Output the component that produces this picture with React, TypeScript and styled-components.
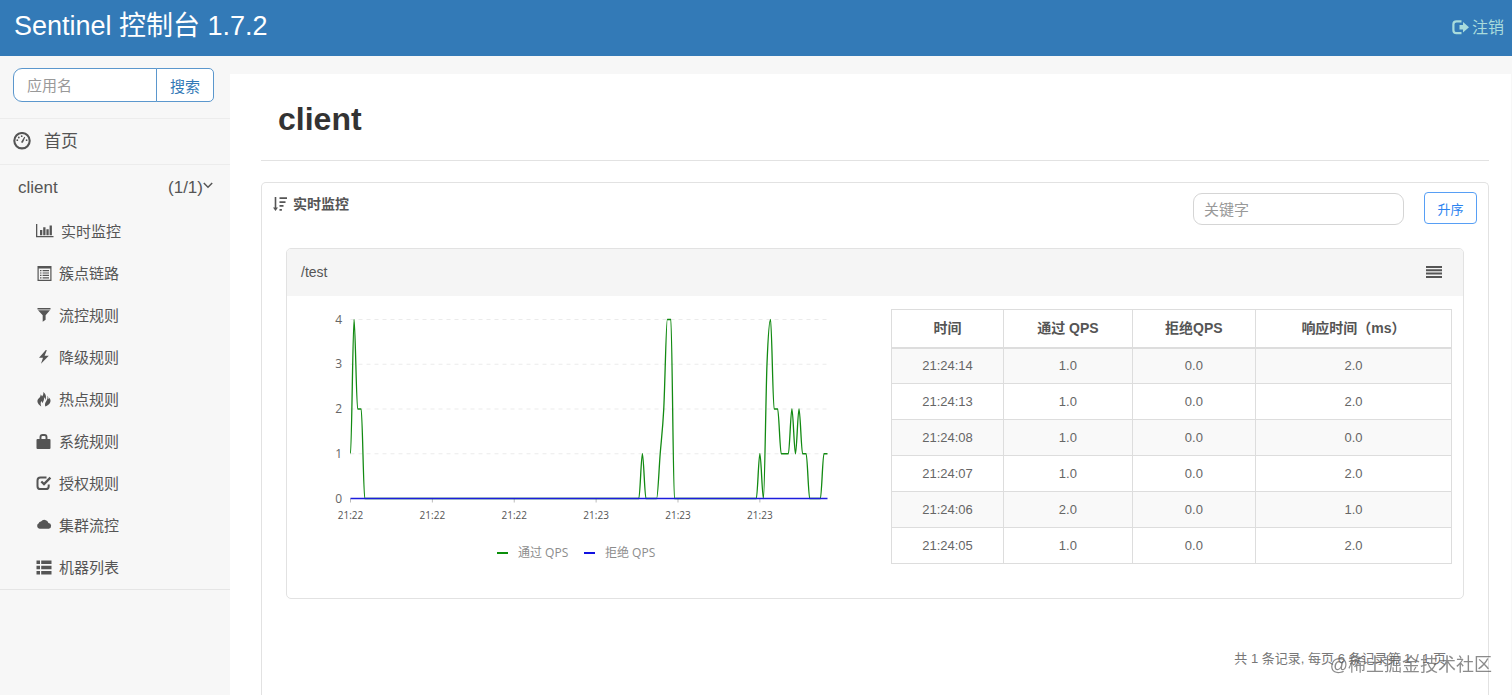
import React from "react";
import styled, { createGlobalStyle } from "styled-components";

const sans = `"Liberation Sans", "Noto Sans CJK SC", sans-serif`;

const GlobalStyle = createGlobalStyle`
  *, *::before, *::after { box-sizing: border-box; }
  body {
    margin: 0;
    background: #f7f7f7;
    color: #555;
    font-family: ${sans};
    font-size: 14px;
    line-height: 20px;
  }
  button, input { font-family: inherit; }
  a { color: inherit; text-decoration: none; }
`;

const Page = styled.div`
  display: flex;
  flex-direction: column;
  min-height: 100vh;
`;

const Header = styled.header`
  display: flex;
  justify-content: space-between;
  height: 56px;
  padding: 0 8px 0 14px;
  background: #337ab7;
`;

const Brand = styled.a`
  && { color: #fff; }
  font-size: 27px;
  line-height: 52px;
`;

const Logout = styled.a`
  display: flex;
  align-items: center;
  gap: 3px;
  && { color: #a9dcdc; }
  font-size: 16px;
`;

const Columns = styled.div`
  display: flex;
  flex: 1;
`;

const Sidebar = styled.nav`
  flex: none;
  width: 230px;
`;

const SearchForm = styled.form`
  display: flex;
  height: 34px;
  margin: 12px 16px 16px 13px;
`;

const AppSearch = styled.input`
  flex: 1;
  min-width: 0;
  padding: 0 13px;
  border: 1px solid #5b97cd;
  border-radius: 9px 0 0 9px;
  background: #fff;
  font-size: 15px;
  outline: none;
  &::placeholder { color: #999; }
`;

const SearchButton = styled.button`
  width: 58px;
  margin-left: -1px;
  padding: 0;
  border: 1px solid #5b97cd;
  border-radius: 0 5px 5px 0;
  background: #fff;
  color: #337ab7;
  font-size: 15px;
`;

const HomeLink = styled.a`
  display: flex;
  align-items: center;
  gap: 13px;
  height: 46px;
  padding-left: 13px;
  border-top: 1px solid #ececec;
  font-size: 17px;
`;

const AppRow = styled.a`
  display: flex;
  align-items: center;
  height: 46px;
  padding: 0 17px 0 18px;
  border-top: 1px solid #ececec;
  font-size: 17px;
`;

const AppCount = styled.span`
  margin-left: auto;
`;

const Menu = styled.ul`
  margin: 0;
  padding: 1px 0 0;
  list-style: none;
  border-bottom: 1px solid #e5e5e5;
`;

const MenuLink = styled.a`
  display: flex;
  align-items: center;
  gap: 7px;
  height: 42px;
  padding-left: 36px;
  font-size: 15px;
`;

const Main = styled.main`
  display: flex;
  flex: 1;
  flex-direction: column;
  min-width: 0;
  margin: 18px 1px 0 0;
  padding: 0 22px 0 31px;
  background: #fff;
`;

const Title = styled.h1`
  margin: 0 0 21px;
  padding: 25px 17px 21px;
  border-bottom: 1px solid #e2e2e2;
  color: #333;
  font-size: 32px;
  line-height: 40px;
`;

const Card = styled.section`
  flex: 1;
  padding: 0 24px;
  border: 1px solid #e2e2e2;
  border-bottom: 0;
  border-radius: 5px 5px 0 0;
`;

const CardHeader = styled.div`
  display: flex;
  align-items: flex-start;
  margin: 0 -13px 23px;
  padding-top: 9px;
`;

const CardTitle = styled.h2`
  display: flex;
  align-items: center;
  gap: 6px;
  margin: 2px auto 0 0;
  font-size: 14px;
  line-height: 20px;
`;

const Keyword = styled.input`
  width: 211px;
  height: 32px;
  margin: 1px 20px 0 0;
  padding: 0 10px;
  border: 1px solid #d5d5d5;
  border-radius: 9px;
  background: #fff;
  font-size: 15px;
  outline: none;
  &::placeholder { color: #999; }
`;

const SortButton = styled.button`
  width: 53px;
  height: 32px;
  padding: 0;
  border: 1px solid #579ff5;
  border-radius: 4px;
  background: #fff;
  color: #2b83f0;
  font-size: 13px;
`;

const Panel = styled.article`
  border: 1px solid #e2e2e2;
  border-radius: 5px;
  overflow: hidden;
`;

const PanelHeader = styled.header`
  display: flex;
  align-items: center;
  justify-content: space-between;
  height: 47px;
  padding: 0 21px 2px 14px;
  background: #f5f5f5;
`;

const IconButton = styled.button`
  display: flex;
  padding: 1px 0 0;
  border: 0;
  background: none;
  color: inherit;
`;

const PanelBody = styled.div`
  display: grid;
  grid-template-columns: 1fr 1fr;
`;

const Chart = styled.svg`
  display: block;
  width: 100%;
  font-family: "Open Sans", "Noto Sans CJK SC", sans-serif;
`;

const TableWrap = styled.div`
  padding: 13px 11px 0 16px;
`;

const Table = styled.table`
  width: 100%;
  border-collapse: collapse;
  table-layout: fixed;
  color: #666;
  font-size: 13px;
  text-align: center;
  th, td {
    padding: 0;
    border: 1px solid #ddd;
  }
  th {
    height: 38px;
    border-bottom-width: 2px;
    color: #555;
    font-size: 14px;
  }
  td { height: 36px; }
  tbody tr:nth-child(odd) { background: #f9f9f9; }
`;

const Pagination = styled.p`
  margin: 50px 18px 0;
  color: #777;
  font-size: 13px;
  text-align: right;
`;

const Watermark = styled.div`
  position: fixed;
  right: 20px;
  bottom: 17px;
  color: rgba(90, 90, 90, 0.7);
  font-size: 18px;
  line-height: 26px;
  pointer-events: none;
`;

type IconProps = { w?: number; h?: number; children: React.ReactNode };

const Icon = ({ w = 16, h = 16, children }: IconProps) => (
  <svg width={w} height={h} viewBox={`0 0 ${w} ${h}`} fill="currentColor" aria-hidden="true">
    {children}
  </svg>
);

const LogoutIcon = () => (
  <Icon w={17}>
    <path d="M9.5 1.300H4.500Q1.400 1.300 1.400 4.300V10.200Q1.400 13.200 4.500 13.200H9.500" fill="none" stroke="currentColor" strokeWidth="2.200" />
    <path d="M11 2V5H7.500V9.400H11V12.400L17 7.200Z" />
  </Icon>
);

const DashboardIcon = () => (
  <Icon w={18} h={20}>
    <circle cx="9" cy="8.700" r="7.700" fill="none" stroke="currentColor" strokeWidth="2.100" />
    <path d="M8.100 9.900 11.300 4.700l.9.5-2.200 5.200a1.100 1.100 0 0 1-1.900-.5Z" />
    <circle cx="4.300" cy="8.200" r="0.900" />
    <circle cx="5.800" cy="5.500" r="0.900" />
    <circle cx="8.700" cy="4.200" r="0.900" />
    <circle cx="13.600" cy="8.200" r="0.900" />
  </Icon>
);

const StatsIcon = () => (
  <Icon w={18}>
    <path d="M0 0h1.300v12H17.500v1.300H0ZM4 6h2.300v5.200H4ZM7.200 3.200h2.300V11.200H7.200ZM10.400 5.200h2.300V11.200h-2.300ZM13.600 1.500h2.300V11.200h-2.300Z" />
  </Icon>
);

const ListAltIcon = () => (
  <Icon>
    <path fillRule="evenodd" d="M1.500 0h14v15h-14ZM2.700 2.500v11.300h11.600V2.500Z" />
    <path d="M4 4h1.500v1.200H4ZM6.600 4H13v1.200H6.600ZM4 6.400h1.500v1.200H4ZM6.600 6.400H13v1.200H6.600ZM4 8.800h1.500v1.200H4ZM6.600 8.800H13v1.200H6.600ZM4 11.200h1.500v1.200H4ZM6.600 11.200H13v1.200H6.600Z" />
  </Icon>
);

const FilterIcon = () => (
  <Icon>
    <path d="M1.500 0h13v1.500h-13ZM2 2.200h12L9.600 7.200v4.600L6.700 13.700V7.200Z" />
  </Icon>
);

const FlashIcon = () => (
  <Icon>
    <path d="M9.800 0 3 7.800h4L5 13.700l7.800-8H8.600L10.800.3Z" />
  </Icon>
);

const FireIcon = () => (
  <Icon>
    <path d="M7.200 0c.5 2-.1 3.200-1.200 4.500-.4-1-.7-1.600-1.400-2.100.2 1.900-.8 2.800-2 4.100C.800 8.400 .7 11.400 5.200 14.400 4.300 11.700 4.600 10.400 5.400 9c.5.700.7 1.300.7 2.200C7.800 9.200 8.400 7.200 7.900 5.200c1 .7 1.300 1.700 1.300 2.900C10.900 4.900 9.800 1.700 7.200 0Z" />
    <path d="M11.400 3.800c.5 2.400-.2 4-1.200 5.400-1.200 1.700-1.500 3-.9 5.300 5.100-1.700 6.600-5.900 4-8.800-.1.700-.3 1.100-.9 1.500.1-1.300-.2-2.500-1-3.400Z" />
  </Icon>
);

const LockIcon = () => (
  <Icon>
    <path d="M4.500 6V3Q4.500 1 6.500 1H8.500Q10.500 1 10.500 3V6" fill="none" stroke="currentColor" strokeWidth="1.900" />
    <rect x="0.500" y="5" width="14" height="10" rx="1" />
  </Icon>
);

const CheckIcon = () => (
  <Icon>
    <path d="M10.500 1.500H4.500Q1.500 1.500 1.500 4.500V10.200Q1.500 13.100 4.500 13.100H9.700Q12.700 13.100 12.700 10.200V8.500" fill="none" stroke="currentColor" strokeWidth="2" />
    <path d="M5.300 5.500 8 8.100 14.400 1.600" fill="none" stroke="currentColor" strokeWidth="2.300" />
  </Icon>
);

const CloudIcon = () => (
  <Icon>
    <path d="M3.600 10.800A3 3 0 0 1 2.700 5.200 2.300 2.300 0 0 1 5 3.400 4.400 4.400 0 0 1 12.500 4.900 3 3 0 0 1 12.800 10.800Z" />
  </Icon>
);

const ThListIcon = () => (
  <Icon>
    <path d="M.5 .500h3.500v3.500H.5ZM5.200 .500h10.300v3.500H5.200ZM.5 5.700h3.500v3.500H.5ZM5.200 5.700h10.300v3.500H5.200ZM.5 10.900h3.500v3.500H.5ZM5.200 10.900h10.300v3.500H5.200Z" />
  </Icon>
);

const SortIcon = () => (
  <Icon w={14}>
    <path d="M1.700 1h1.600v10.500H5L2.500 15 0 11.500h1.700ZM6.500 1.300H14v1.700H6.500ZM6.500 5.200h6v1.700h-6ZM6.500 9.100h4v1.700h-4ZM6.500 13h2.400v1.700H6.500Z" />
  </Icon>
);

const JustifyIcon = () => (
  <Icon w={16} h={12}>
    <path d="M0 0h16v2H0ZM0 3.300h16v2H0ZM0 6.600h16v2H0ZM0 9.900h16v2H0Z" />
  </Icon>
);

const ChevronIcon = () => (
  <Icon w={10} h={12}>
    <path d="M.8 1 5 5.200 9.200 1" fill="none" stroke="currentColor" strokeWidth="1.500" />
  </Icon>
);

const menu = [
  { label: "实时监控", icon: StatsIcon },
  { label: "簇点链路", icon: ListAltIcon },
  { label: "流控规则", icon: FilterIcon },
  { label: "降级规则", icon: FlashIcon },
  { label: "热点规则", icon: FireIcon },
  { label: "系统规则", icon: LockIcon },
  { label: "授权规则", icon: CheckIcon },
  { label: "集群流控", icon: CloudIcon },
  { label: "机器列表", icon: ThListIcon },
];

const rows = [
  ["21:24:14", "1.0", "0.0", "2.0"],
  ["21:24:13", "1.0", "0.0", "2.0"],
  ["21:24:08", "1.0", "0.0", "0.0"],
  ["21:24:07", "1.0", "0.0", "2.0"],
  ["21:24:06", "2.0", "0.0", "1.0"],
  ["21:24:05", "1.0", "0.0", "2.0"],
];

/* Passed requests per sample; samples not listed are zero. */
const SAMPLES = 135;
const passed: Record<number, number> = {
  0: 1, 1: 4, 2: 2, 3: 2, 82: 1, 87: 1, 88: 2, 89: 4, 90: 4, 115: 1, 117: 3, 118: 4,
  119: 2, 120: 2, 121: 1, 122: 1, 123: 1, 124: 2, 125: 1, 126: 2, 127: 1, 128: 1, 133: 1, 134: 1,
};

const plot = { left: 63.5, right: 540.5, top: 23.5, bottom: 202.5 };
const step = (plot.right - plot.left) / (SAMPLES - 1);
const px = (i: number) => plot.left + i * step;
const py = (v: number) => plot.bottom - (v * (plot.bottom - plot.top)) / 4;

/* Monotone cubic interpolation, so that the curve never overshoots a sample. */
function smoothPath(values: number[]) {
  const slope = (i: number) => {
    const before = values[i] - values[i - 1];
    const after = values[i + 1] - values[i];
    if (!(before * after > 0)) return 0;
    return Math.sign(before) * Math.min(Math.abs(before), Math.abs(after), Math.abs(before + after) / 4) * 2;
  };
  let d = `M${px(0)} ${py(values[0])}`;
  for (let i = 1; i < values.length; i++) {
    const c1 = py(values[i - 1] + slope(i - 1) / 3);
    const c2 = py(values[i] - slope(i) / 3);
    d += `C${px(i - 1 + 1 / 3)} ${c1} ${px(i - 1 / 3)} ${c2} ${px(i)} ${py(values[i])}`;
  }
  return d;
}

const passedPath = smoothPath(Array.from({ length: SAMPLES }, (_, i) => passed[i] ?? 0));
const timeLabels = ["21:22", "21:22", "21:22", "21:23", "21:23", "21:23"];

const QpsChart = () => (
  <Chart viewBox="0 0 588 302" role="img" aria-label="QPS">
    {[1, 2, 3, 4].map((v) => (
      <line key={v} x1={plot.left} x2={plot.right} y1={py(v)} y2={py(v)} stroke="#ebebeb" strokeDasharray="4 4" />
    ))}
    {[0, 1, 2, 3, 4].map((v) => (
      <text key={v} x={55} y={py(v) + 4} textAnchor="end" fontSize="12" fill="#666">{v}</text>
    ))}
    {timeLabels.map((t, k) => (
      <g key={k}>
        <line x1={px(k * 23)} x2={px(k * 23)} y1={plot.bottom} y2={plot.bottom + 4} stroke="#bbb" />
        <text x={px(k * 23)} y={plot.bottom + 20} textAnchor="middle" fontSize="10" fill="#555">{t}</text>
      </g>
    ))}
    <path d={passedPath} fill="none" stroke="#128a12" strokeWidth="1.300" />
    <line x1={plot.left} x2={plot.right} y1={plot.bottom} y2={plot.bottom} stroke="#1d1ddd" strokeWidth="1.500" />
    <rect x="210" y="256" width="11" height="2" fill="#0a8f0a" />
    <text x="231" y="261" fontSize="12" fill="#8c8c8c">通过 QPS</text>
    <rect x="297" y="256" width="11" height="2" fill="#1111e0" />
    <text x="318" y="261" fontSize="12" fill="#8c8c8c">拒绝 QPS</text>
  </Chart>
);

export default function App() {
  return (
    <Page>
      <GlobalStyle />
      <Header>
        <Brand href="#">Sentinel 控制台 1.7.2</Brand>
        <Logout href="#"><LogoutIcon />注销</Logout>
      </Header>
      <Columns>
        <Sidebar>
          <SearchForm onSubmit={(e) => e.preventDefault()}>
            <AppSearch placeholder="应用名" aria-label="应用名" />
            <SearchButton type="submit">搜索</SearchButton>
          </SearchForm>
          <HomeLink href="#"><DashboardIcon />首页</HomeLink>
          <AppRow href="#">
            client
            <AppCount>(1/1)</AppCount>
            <ChevronIcon />
          </AppRow>
          <Menu>
            {menu.map(({ label, icon: ItemIcon }) => (
              <li key={label}>
                <MenuLink href="#"><ItemIcon />{label}</MenuLink>
              </li>
            ))}
          </Menu>
        </Sidebar>
        <Main>
          <Title>client</Title>
          <Card>
            <CardHeader>
              <CardTitle><SortIcon />实时监控</CardTitle>
              <Keyword placeholder="关键字" aria-label="关键字" />
              <SortButton type="button">升序</SortButton>
            </CardHeader>
            <Panel>
              <PanelHeader>
                /test
                <IconButton type="button" aria-label="列表"><JustifyIcon /></IconButton>
              </PanelHeader>
              <PanelBody>
                <QpsChart />
                <TableWrap>
                  <Table>
                    <colgroup>
                      <col width="20%" />
                      <col width="23%" />
                      <col width="22%" />
                      <col width="35%" />
                    </colgroup>
                    <thead>
                      <tr>
                        <th scope="col">时间</th>
                        <th scope="col">通过 QPS</th>
                        <th scope="col">拒绝QPS</th>
                        <th scope="col">响应时间（ms）</th>
                      </tr>
                    </thead>
                    <tbody>
                      {rows.map((row) => (
                        <tr key={row[0]}>
                          {row.map((cell, i) => <td key={i}>{cell}</td>)}
                        </tr>
                      ))}
                    </tbody>
                  </Table>
                </TableWrap>
              </PanelBody>
            </Panel>
            <Pagination>共 1 条记录, 每页 6 条记录第 1 / 1 页</Pagination>
          </Card>
        </Main>
      </Columns>
      <Watermark>@稀土掘金技术社区</Watermark>
    </Page>
  );
}
